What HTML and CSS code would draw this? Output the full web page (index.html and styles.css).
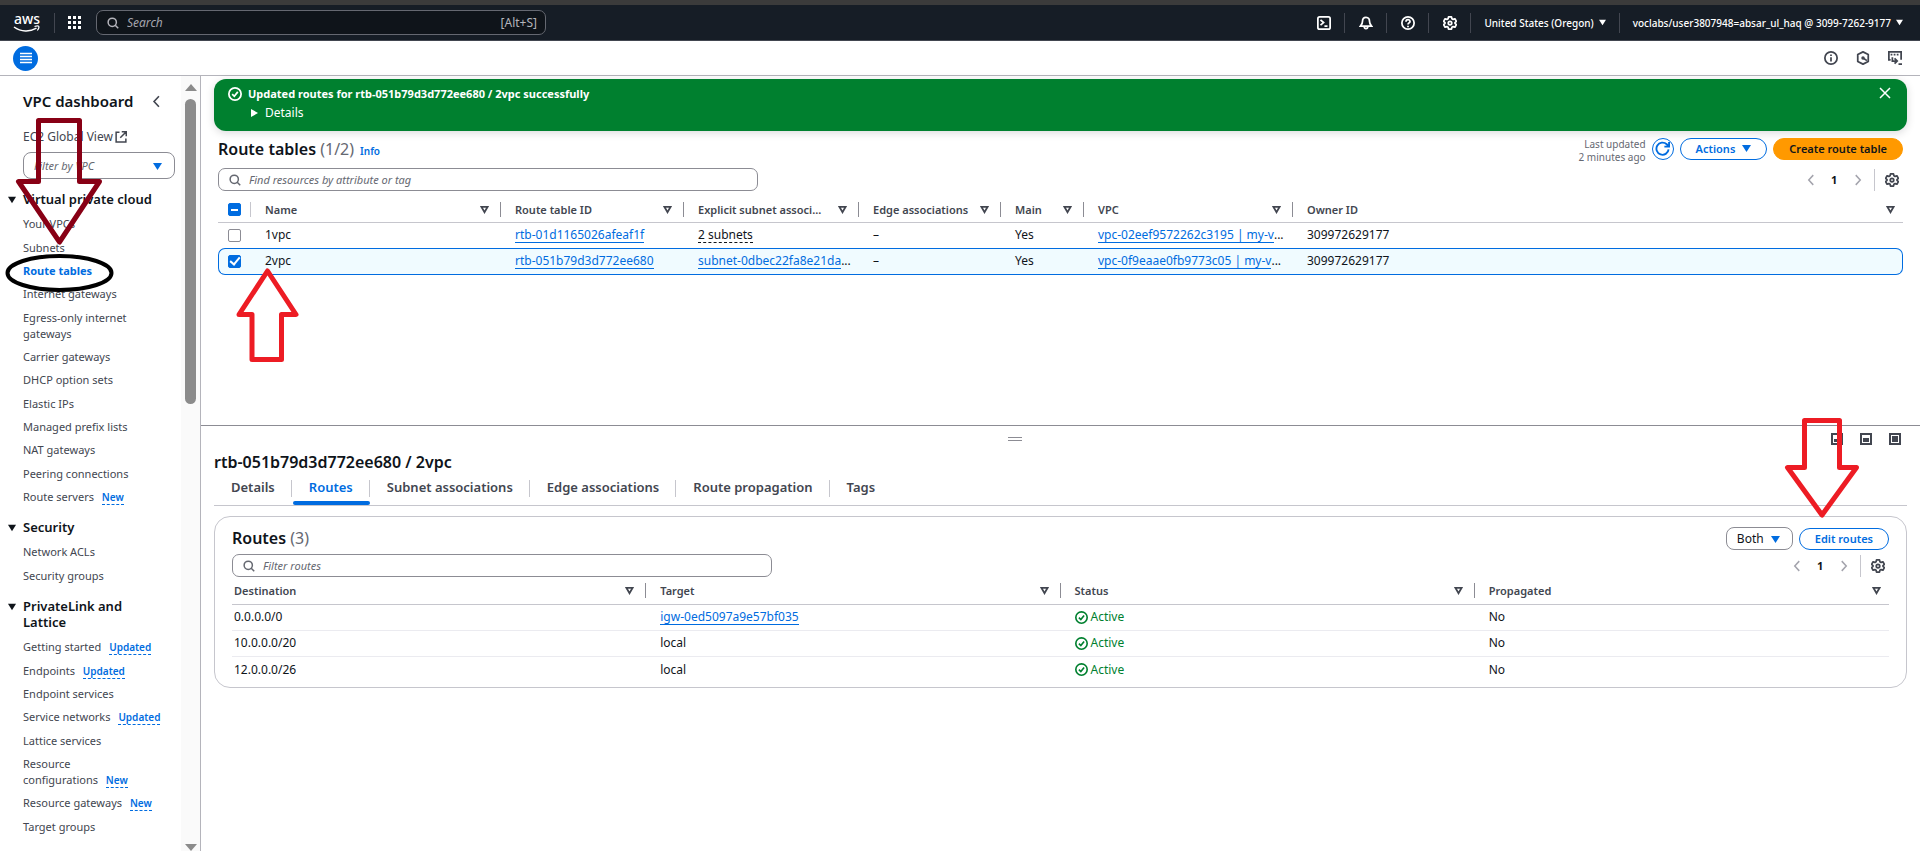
FILE: index.html
```html
<!DOCTYPE html>
<html lang="en">
<head>
  <meta charset="UTF-8" />
  <meta name="viewport" content="width=device-width, initial-scale=1.0">
  <title>Route tables | VPC Console</title>
  <link rel="stylesheet" href="styles.css">
</head>
<body>
  <!-- Shared icons -->
  <svg class="sprite" width="0" height="0">
    <symbol id="i-search" viewBox="0 0 16 16"><g fill="none" stroke="currentColor" stroke-width="2"><circle cx="7" cy="7" r="5.5"/><path d="M11 11l4 4"/></g></symbol>
    <symbol id="i-caret" viewBox="0 0 10 10"><path d="M0 1h10L5 9z" fill="currentColor"/></symbol>
    <symbol id="i-filter" viewBox="0 0 10 10"><path d="M1.500 2h7L5 8z" fill="none" stroke="currentColor" stroke-width="2"/></symbol>
    <symbol id="i-left" viewBox="0 0 16 16"><path d="M11 1.500L5 8l6 6.500" fill="none" stroke="currentColor" stroke-width="2"/></symbol>
    <symbol id="i-right" viewBox="0 0 16 16"><path d="M5 1.500L11 8l-6 6.500" fill="none" stroke="currentColor" stroke-width="2"/></symbol>
    <symbol id="i-check" viewBox="0 0 16 16"><g fill="none" stroke="currentColor" stroke-width="2"><circle cx="8" cy="8" r="7"/><path d="M4.800 8.200l2.400 2.400 4-5"/></g></symbol>
    <symbol id="i-gear" viewBox="0 0 16 16"><g fill="none" stroke="currentColor" stroke-width="2" stroke-linejoin="round"><path d="M6.300 1h3.400l.5 2.100 1.300.8 2.100-.7 1.700 2.900-1.600 1.500v.8l1.600 1.500-1.700 2.900-2.100-.7-1.300.8-.5 2.100H6.300l-.5-2.100-1.300-.8-2.100.7L.7 9.900l1.600-1.500v-.8L.7 6.100l1.700-2.900 2.100.7 1.300-.8z"/><circle cx="8" cy="8" r="2"/></g></symbol>
  </svg>

  <header class="topbar">
    <a class="logo" href="#" aria-label="AWS home">
      <svg width="32" height="30" viewBox="0 0 32 30"><text x="1" y="16" class="logo-text">aws</text><path d="M1 19c7 5 16 5 22.500 1.200" fill="none" stroke="#fff" stroke-width="1.500"/><path d="M21.500 18.500c2-.6 4-.6 4.300 0s-.3 2.500-1.500 4" fill="none" stroke="#fff" stroke-width="1.200"/></svg>
    </a>
    <button class="apps" aria-label="Services">
      <svg width="13" height="13" viewBox="0 0 13 13" fill="#fff"><path d="M0 0h3v3H0zM5 0h3v3H5zM10 0h3v3h-3zM0 5h3v3H0zM5 5h3v3H5zM10 5h3v3h-3zM0 10h3v3H0zM5 10h3v3H5zM10 10h3v3h-3z"/></svg>
    </button>
    <label class="global-search">
      <svg width="12" height="12"><use href="#i-search"/></svg>
      <input type="text" placeholder="Search" aria-label="Search">
      <span>[Alt+S]</span>
    </label>
    <div class="top-actions">
      <button aria-label="CloudShell"><svg width="14" height="14" viewBox="0 0 16 16" fill="none" stroke="currentColor" stroke-width="2"><rect x="1" y="1" width="14" height="14" rx="2"/><path d="M4 4.500l3.500 3L4 10.500M8.500 11.500H12"/></svg></button>
      <button aria-label="Notifications"><svg width="14" height="14" viewBox="0 0 16 16" fill="none" stroke="currentColor" stroke-width="2"><path d="M8 1.500c-3 0-4 2.200-4 4.500 0 3-1 4-2.300 5.500h12.600C13 10 12 9 12 6c0-2.300-1-4.500-4-4.500z"/><path d="M6 12c0 3.200 4 3.200 4 0"/></svg></button>
      <button aria-label="Help"><svg width="14" height="14" viewBox="0 0 16 16" fill="none" stroke="currentColor" stroke-width="2"><circle cx="8" cy="8" r="7"/><path d="M5.700 6.500c0-3 4.600-3 4.600-.3C10.300 8 8 7.800 8 9.800M8 11v1.800"/></svg></button>
      <button aria-label="Settings"><svg width="14" height="14"><use href="#i-gear"/></svg></button>
      <button class="text-btn">United States (Oregon) <svg width="7" height="7"><use href="#i-caret"/></svg></button>
      <button class="text-btn">voclabs/user3807948=absar_ul_haq @ 3099-7262-9177 <svg width="7" height="7"><use href="#i-caret"/></svg></button>
    </div>
  </header>

  <div class="toolbar">
    <button class="menu-btn" aria-label="Menu"><svg width="12" height="12" viewBox="0 0 12 12" stroke="#fff" stroke-width="1.500"><path d="M0 1.500h12M0 4.500h12M0 7.500h12M0 10.500h12"/></svg></button>
    <div class="toolbar-icons">
      <button aria-label="Info"><svg width="14" height="14" viewBox="0 0 16 16" fill="none" stroke="currentColor" stroke-width="2"><circle cx="8" cy="8" r="7"/><path d="M8 7v5M8 4v1.800"/></svg></button>
      <button aria-label="Amazon Q"><svg width="14" height="14" viewBox="0 0 16 16" fill="none" stroke="currentColor" stroke-width="2"><path d="M8 1l6 3v8l-6 3-6-3V4z" stroke-linejoin="round"/><path d="M8 8l4.500 3"/><circle cx="8" cy="8" r="2" fill="currentColor" stroke="none"/></svg></button>
      <button aria-label="Console panel"><svg width="14" height="14" viewBox="0 0 16 16" fill="none" stroke="currentColor" stroke-width="2"><path d="M3 10H1V1h14v9"/><path d="M3 4h10" stroke-dasharray="2 1.500"/><path d="M5 7v4.500h5M7.500 8.500l3 3-3 3M12 15h4"/></svg></button>
    </div>
  </div>

  <div class="layout">
    <nav class="sidebar">
      <div class="side-content">
        <div class="side-title"><h2>VPC dashboard</h2><button aria-label="Close navigation"><svg width="13" height="13"><use href="#i-left"/></svg></button></div>
        <a class="global-view" href="#">EC2 Global View <svg width="12" height="12" viewBox="0 0 16 16" fill="none" stroke="currentColor" stroke-width="2"><path d="M6 1.500H1.500v13h13V10M9 1h6v6M15 1L7 9"/></svg></a>
        <div class="select-wrap vpc-filter">
          <select aria-label="Filter by VPC"><option>Filter by VPC</option></select>
          <svg width="9" height="9"><use href="#i-caret"/></svg>
        </div>

        <section>
          <h3><svg width="8" height="8"><use href="#i-caret"/></svg>Virtual private cloud</h3>
          <ul>
            <li><a href="#">Your VPCs</a></li>
            <li><a href="#">Subnets</a></li>
            <li><a href="#" class="current">Route tables</a></li>
            <li><a href="#">Internet gateways</a></li>
            <li><a href="#">Egress-only internet gateways</a></li>
            <li><a href="#">Carrier gateways</a></li>
            <li><a href="#">DHCP option sets</a></li>
            <li><a href="#">Elastic IPs</a></li>
            <li><a href="#">Managed prefix lists</a></li>
            <li><a href="#">NAT gateways</a></li>
            <li><a href="#">Peering connections</a></li>
            <li><a href="#">Route servers</a> <span class="badge">New</span></li>
          </ul>
        </section>

        <section>
          <h3><svg width="8" height="8"><use href="#i-caret"/></svg>Security</h3>
          <ul>
            <li><a href="#">Network ACLs</a></li>
            <li><a href="#">Security groups</a></li>
          </ul>
        </section>

        <section>
          <h3><svg width="8" height="8"><use href="#i-caret"/></svg>PrivateLink and<br>Lattice</h3>
          <ul>
            <li><a href="#">Getting started</a> <span class="badge">Updated</span></li>
            <li><a href="#">Endpoints</a> <span class="badge">Updated</span></li>
            <li><a href="#">Endpoint services</a></li>
            <li><a href="#">Service networks</a> <span class="badge">Updated</span></li>
            <li><a href="#">Lattice services</a></li>
            <li><a href="#">Resource<br>configurations</a> <span class="badge">New</span></li>
            <li><a href="#">Resource gateways</a> <span class="badge">New</span></li>
            <li><a href="#">Target groups</a></li>
          </ul>
        </section>
      </div>
      <div class="scrollbar">
        <svg width="12" height="7" viewBox="0 0 12 7"><path d="M0 7h12L6 0z" fill="#8b8b8b"/></svg>
        <div class="track"><div class="thumb"></div></div>
        <svg width="12" height="7" viewBox="0 0 12 7"><path d="M0 0h12L6 7z" fill="#8b8b8b"/></svg>
      </div>
    </nav>

    <main>
      <div class="list-pane">
        <div class="flash">
          <svg width="14" height="14"><use href="#i-check"/></svg>
          <div class="flash-text">
            <strong>Updated routes for rtb-051b79d3d772ee680 / 2vpc successfully</strong>
            <button><svg width="7" height="8" viewBox="0 0 7 8"><path d="M0 0l7 4-7 4z" fill="#fff"/></svg>Details</button>
          </div>
          <button aria-label="Dismiss"><svg width="12" height="12" viewBox="0 0 12 12" stroke="#fff" stroke-width="1.500"><path d="M1 1l10 10M11 1L1 11"/></svg></button>
        </div>

        <div class="list">
          <div class="list-head">
            <h1>Route tables <span class="count">(1/2)</span></h1>
            <a class="info" href="#">Info</a>
            <div class="updated">Last updated<br>2 minutes ago</div>
            <button class="btn round" aria-label="Refresh"><svg width="15" height="15" viewBox="0 0 16 16" fill="none" stroke="currentColor" stroke-width="2"><path d="M14.500 9a6.500 6.500 0 1 1-2-5.500L14.500 5.500M15 1v5h-5"/></svg></button>
            <button class="btn actions">Actions <svg width="9" height="9"><use href="#i-caret"/></svg></button>
            <button class="btn primary">Create route table</button>
          </div>
          <div class="filter-row">
            <label class="filter-box"><svg width="12" height="12"><use href="#i-search"/></svg><input type="text" placeholder="Find resources by attribute or tag" aria-label="Find resources"></label>
            <div class="pager">
              <button aria-label="Previous page"><svg width="12" height="12"><use href="#i-left"/></svg></button>
              <b>1</b>
              <button aria-label="Next page"><svg width="12" height="12"><use href="#i-right"/></svg></button>
              <button class="prefs" aria-label="Preferences"><svg width="14" height="14"><use href="#i-gear"/></svg></button>
            </div>
          </div>
          <table class="tables-grid">
            <colgroup><col class="c-check"><col class="c-name"><col class="c-id"><col class="c-subnet"><col class="c-edge"><col class="c-main"><col class="c-vpc"><col></colgroup>
            <thead>
              <tr>
                <th><div><input type="checkbox" class="mixed" aria-label="Select all"></div></th>
                <th><div>Name<svg width="9" height="9"><use href="#i-filter"/></svg></div></th>
                <th><div>Route table ID<svg width="9" height="9"><use href="#i-filter"/></svg></div></th>
                <th><div>Explicit subnet associ...<svg width="9" height="9"><use href="#i-filter"/></svg></div></th>
                <th><div>Edge associations<svg width="9" height="9"><use href="#i-filter"/></svg></div></th>
                <th><div>Main<svg width="9" height="9"><use href="#i-filter"/></svg></div></th>
                <th><div>VPC<svg width="9" height="9"><use href="#i-filter"/></svg></div></th>
                <th><div>Owner ID<svg width="9" height="9"><use href="#i-filter"/></svg></div></th>
              </tr>
            </thead>
            <tbody>
              <tr>
                <td><input type="checkbox" aria-label="Select 1vpc"></td>
                <td>1vpc</td>
                <td><a href="#">rtb-01d1165026afeaf1f</a></td>
                <td><span class="dashed">2 subnets</span></td>
                <td>–</td>
                <td>Yes</td>
                <td><a href="#">vpc-02eef9572262c3195 | my-v</a>...</td>
                <td>309972629177</td>
              </tr>
              <tr class="selected">
                <td><input type="checkbox" aria-label="Select 2vpc" checked></td>
                <td>2vpc</td>
                <td><a href="#">rtb-051b79d3d772ee680</a></td>
                <td><a href="#">subnet-0dbec22fa8e21da</a>...</td>
                <td>–</td>
                <td>Yes</td>
                <td><a href="#">vpc-0f9eaae0fb9773c05 | my-v</a>...</td>
                <td>309972629177</td>
              </tr>
            </tbody>
          </table>
        </div>
      </div>

      <div class="split-panel">
        <div class="panel-bar">
          <div class="handle-area"><div class="handle"></div></div>
          <div class="panel-icons">
            <button aria-label="Small panel"><svg width="12" height="12" viewBox="0 0 12 12"><rect x="1" y="1" width="10" height="10" fill="none" stroke="currentColor" stroke-width="2"/><path d="M3 6h4v3H3z" fill="currentColor"/></svg></button>
            <button aria-label="Half panel"><svg width="12" height="12" viewBox="0 0 12 12"><rect x="1" y="1" width="10" height="10" fill="none" stroke="currentColor" stroke-width="2"/><path d="M3 5h6v4H3z" fill="currentColor"/></svg></button>
            <button aria-label="Full panel"><svg width="12" height="12" viewBox="0 0 12 12"><rect x="1" y="1" width="10" height="10" fill="none" stroke="currentColor" stroke-width="2"/><path d="M3 3h6v6H3z" fill="currentColor"/></svg></button>
          </div>
        </div>
        <h2>rtb-051b79d3d772ee680 / 2vpc</h2>
        <div class="tabs">
          <button>Details</button>
          <button class="active">Routes</button>
          <button>Subnet associations</button>
          <button>Edge associations</button>
          <button>Route propagation</button>
          <button>Tags</button>
        </div>

        <div class="card">
          <div class="card-head">
            <h2>Routes <span class="count">(3)</span></h2>
            <div class="select-wrap both"><select aria-label="Route type"><option>Both</option></select><svg width="9" height="9"><use href="#i-caret"/></svg></div>
            <button class="btn">Edit routes</button>
          </div>
          <div class="filter-row">
            <label class="filter-box"><svg width="12" height="12"><use href="#i-search"/></svg><input type="text" placeholder="Filter routes" aria-label="Filter routes"></label>
            <div class="pager">
              <button aria-label="Previous page"><svg width="12" height="12"><use href="#i-left"/></svg></button>
              <b>1</b>
              <button aria-label="Next page"><svg width="12" height="12"><use href="#i-right"/></svg></button>
              <button class="prefs" aria-label="Preferences"><svg width="14" height="14"><use href="#i-gear"/></svg></button>
            </div>
          </div>
          <table class="routes">
            <thead>
              <tr>
                <th><div>Destination<svg width="9" height="9"><use href="#i-filter"/></svg></div></th>
                <th><div>Target<svg width="9" height="9"><use href="#i-filter"/></svg></div></th>
                <th><div>Status<svg width="9" height="9"><use href="#i-filter"/></svg></div></th>
                <th><div>Propagated<svg width="9" height="9"><use href="#i-filter"/></svg></div></th>
              </tr>
            </thead>
            <tbody>
              <tr><td>0.0.0.0/0</td><td><a href="#">igw-0ed5097a9e57bf035</a></td><td><span class="ok"><svg width="13" height="13"><use href="#i-check"/></svg>Active</span></td><td>No</td></tr>
              <tr><td>10.0.0.0/20</td><td>local</td><td><span class="ok"><svg width="13" height="13"><use href="#i-check"/></svg>Active</span></td><td>No</td></tr>
              <tr><td>12.0.0.0/26</td><td>local</td><td><span class="ok"><svg width="13" height="13"><use href="#i-check"/></svg>Active</span></td><td>No</td></tr>
            </tbody>
          </table>
        </div>
      </div>
    </main>
  </div>

  <!-- Hand-drawn markers over the console -->
  <svg class="marks left" width="310" height="380" viewBox="0 0 310 380" fill="none" stroke-width="5" stroke-linejoin="round">
    <path d="M38.500 120.500h41v61H99.500L59.500 242 18.500 181.500h20z" stroke="#880015"/>
    <path d="M267.500 271L296 314.500h-14.500v45h-29.500v-45h-13z" stroke="#ed1c24"/>
    <ellipse cx="59.500" cy="273" rx="52" ry="17" stroke="#000" stroke-width="4"/>
  </svg>
  <svg class="marks right" width="80" height="110" viewBox="0 0 80 110" fill="none" stroke="#ed1c24" stroke-width="5" stroke-linejoin="round">
    <path d="M24.500 10.500h35v47H76.500L42 105 7.500 57.500h17z"/>
  </svg>
</body>
</html>
```
FILE: styles.css
```css
* {
  box-sizing: border-box;
}

body {
  margin: 0;
  height: 100vh;
  overflow: hidden;
  display: flex;
  flex-direction: column;
  position: relative;
  font-family: "Noto Sans", "Open Sans", sans-serif;
  font-size: 11px;
  line-height: 16px;
  color: #0f141a;
  background: #fff;
}

button {
  font: inherit;
  color: inherit;
  background: none;
  border: none;
  padding: 0;
  display: flex;
  align-items: center;
  justify-content: center;
}

input,
select {
  font: inherit;
  color: inherit;
  background: none;
  border: none;
  outline: none;
  padding: 0;
  margin: 0;
}

h1, h2, h3, ul {
  margin: 0;
  padding: 0;
}

h1, h2 {
  font-size: 16px;
  line-height: 22px;
  font-weight: 600;
}

a {
  color: #006ce0;
  text-decoration: none;
}

svg {
  flex: none;
}

.sprite {
  position: absolute;
}

/* top bar */
.topbar {
  display: flex;
  align-items: center;
  height: 41px;
  flex: none;
  border-top: 5px solid #3b3b3b;
  border-bottom: 1px solid #424650;
  background: #161d26;
  color: #fff;
}

.logo {
  display: flex;
  align-items: center;
  width: 55px;
  height: 20px;
  padding-left: 13px;
  border-right: 1px solid #424650;
}

.logo-text {
  font-size: 14px;
  font-weight: 500;
  fill: #fff;
}

.apps {
  width: 39px;
  margin-right: 2px;
}

.global-search {
  display: flex;
  align-items: center;
  gap: 8px;
  width: 450px;
  height: 25px;
  padding: 0 8px 0 10px;
  border: 1px solid #656871;
  border-radius: 7px;
  background: #0f141a;
  color: #b4b4bb;
  font-size: 12px;
}

.global-search input {
  flex: 1;
}

input::placeholder {
  font-style: italic;
  color: #656871;
  opacity: 1;
}

.global-search input::placeholder {
  color: #a4a4ad;
}

.top-actions {
  display: flex;
  margin-left: auto;
}

.top-actions button {
  width: 42px;
  height: 20px;
  border-right: 1px solid #424650;
}

.top-actions .text-btn {
  width: auto;
  gap: 5px;
  padding: 0 13px;
  font-size: 10px;
  font-weight: 500;
}

.top-actions .text-btn:last-child {
  padding-right: 17px;
  border: none;
}

.toolbar {
  display: flex;
  align-items: center;
  justify-content: space-between;
  height: 35px;
  flex: none;
  padding: 0 18px 0 13px;
  border-bottom: 1px solid #b4b4bb;
  color: #424650;
}

.menu-btn {
  width: 25px;
  height: 25px;
  border-radius: 50%;
  background: #006ce0;
}

.toolbar-icons {
  display: flex;
  gap: 18px;
}

/* sidebar */
.layout {
  display: flex;
  flex: 1;
  min-height: 0;
}

.sidebar {
  display: flex;
  width: 201px;
  flex: none;
  border-right: 1px solid #b4b4bb;
  color: #424650;
}

.side-content {
  flex: 1;
  padding: 14px 6px 0 23px;
  overflow: hidden;
}

.side-title {
  display: flex;
  justify-content: space-between;
  align-items: center;
  padding-right: 12px;
  color: #0f141a;
}

.side-title h2 {
  font-size: 15px;
}

.side-title button {
  color: #424650;
}

.side-content a {
  color: #424650;
}

.side-content .global-view {
  display: flex;
  align-items: center;
  gap: 2px;
  margin: 17px 0 7px;
  font-size: 12px;
}

.select-wrap {
  position: relative;
}

.select-wrap select {
  appearance: none;
  width: 100%;
  height: 100%;
  padding: 0 10px;
  border: 1px solid #8c8c94;
  border-radius: 8px;
}

.select-wrap svg {
  position: absolute;
  right: 13px;
  top: 50%;
  margin-top: -4px;
  color: #006ce0;
  pointer-events: none;
}

.vpc-filter {
  height: 27px;
  font-style: italic;
  color: #656871;
}

h3 {
  display: flex;
  margin: 12px 0 9px -15px;
  gap: 7px;
  font-size: 13px;
  line-height: 16px;
  font-weight: 600;
  color: #0f141a;
}

section + section h3 {
  margin-top: 14px;
}

h3 svg {
  margin-top: 5px;
}

.side-content ul {
  list-style: none;
}

.side-content li {
  margin-bottom: 7px;
}

.side-content li:nth-child(3n+1) {
  margin-bottom: 8px;
}

.side-content .current {
  color: #006ce0;
  font-weight: 700;
}

.badge {
  margin-left: 5px;
  font-size: 10px;
  font-weight: 600;
  color: #006ce0;
  border-bottom: 1px dashed #006ce0;
}

.scrollbar {
  display: flex;
  flex-direction: column;
  align-items: center;
  width: 19px;
  padding-top: 8px;
  background: #fafafa;
}

.track {
  flex: 1;
  width: 11px;
  padding-top: 8px;
}

.thumb {
  height: 41%;
  border-radius: 6px;
  background: #8b8b8b;
}

/* main */
main {
  flex: 1;
  min-width: 0;
  display: flex;
  flex-direction: column;
}

.list-pane {
  height: 349px;
  flex: none;
  padding: 3px 13px 0;
}

.flash {
  display: flex;
  align-items: flex-start;
  height: 52px;
  padding: 8px 16px 0 14px;
  border-radius: 12px;
  background: #00802f;
  color: #fff;
  box-shadow: 0 2px 8px rgba(0, 7, 22, 0.15);
}

.flash-text {
  flex: 1;
  margin: -2px 0 0 6px;
}

.flash-text strong {
  display: block;
  line-height: 18px;
  font-weight: 700;
}

.flash-text button {
  gap: 7px;
  padding-left: 3px;
  line-height: 20px;
  font-size: 12px;
}

.list {
  padding: 0 4px;
}

.list-head {
  display: flex;
  align-items: center;
  gap: 6px;
  height: 35px;
  margin-bottom: 2px;
}

.card-head h2 {
  padding-bottom: 2px;
}

.count {
  font-weight: 400;
  color: #656871;
}

.info {
  font-size: 10px;
  font-weight: 600;
  padding-top: 4px;
}

.updated {
  margin-left: auto;
  font-size: 10px;
  line-height: 13px;
  text-align: right;
  padding-top: 4px;
  color: #656871;
}

.btn {
  height: 22px;
  padding: 0 15px;
  border: 1px solid #006ce0;
  border-radius: 11px;
  color: #006ce0;
  font-weight: 600;
}

.round {
  width: 22px;
  padding: 0;
}

.actions {
  gap: 7px;
}

.primary {
  border-color: #ff9900;
  background: #ff9900;
  color: #0f141a;
}

.filter-row {
  display: flex;
  align-items: center;
  justify-content: space-between;
}

.filter-box {
  display: flex;
  align-items: center;
  gap: 8px;
  width: 540px;
  height: 23px;
  padding: 0 10px;
  border: 1px solid #8c8c94;
  border-radius: 7px;
  color: #656871;
}

.filter-box input {
  flex: 1;
}

.pager {
  display: flex;
  align-items: center;
  gap: 14px;
  color: #424650;
}

.pager button {
  color: #a4a4ad;
}

.pager b {
  width: 7px;
  color: #0f141a;
}

.pager .prefs {
  height: 22px;
  margin-left: -4px;
  padding: 0 4px 0 10px;
  border-left: 1px solid #c6c6cd;
  color: #424650;
}

table {
  width: 100%;
  table-layout: fixed;
  border-collapse: separate;
  border-spacing: 0;
}

th, td {
  height: 26px;
  padding: 0 0 0 14px;
  text-align: left;
  white-space: nowrap;
}

td {
  padding-bottom: 1px;
  border-bottom: 1px solid #ebebf0;
  font-size: 12px;
}

th {
  font-weight: 600;
  color: #424650;
  border-bottom: 1px solid #c6c6cd;
}

th div {
  display: flex;
  align-items: center;
  justify-content: space-between;
  height: 15px;
  padding-right: 11px;
  border-right: 1px solid #8c8c94;
}

th:last-child div {
  border: none;
  padding-right: 8px;
}

td a {
  display: inline-block;
  line-height: 14px;
  border-bottom: 1px solid #006ce0;
}

.tables-grid th {
  height: 32px;
  padding-top: 6px;
}

.tables-grid td {
  height: 25px;
  border: none;
}

.tables-grid th:first-child,
.tables-grid td:first-child {
  padding-left: 10px;
}

.tables-grid th:first-child div {
  border-color: #c6c6cd;
  padding-right: 9px;
}

.c-check { width: 33px; }
.c-name { width: 250px; }
.c-id { width: 183px; }
.c-subnet { width: 175px; }
.c-edge { width: 142px; }
.c-main { width: 83px; }
.c-vpc { width: 209px; }

.tables-grid .selected td {
  height: 27px;
  background: #f0fbff;
  border-top: 1px solid #006ce0;
  border-bottom: 1px solid #006ce0;
}

.tables-grid .selected td:first-child {
  padding-left: 9px;
  border-left: 1px solid #006ce0;
  border-radius: 7px 0 0 7px;
}

.tables-grid .selected td:last-child {
  border-right: 1px solid #006ce0;
  border-radius: 0 7px 7px 0;
}

.dashed {
  display: inline-block;
  line-height: 14px;
  border-bottom: 1px dashed #0f141a;
}

input[type="checkbox"] {
  appearance: none;
  display: grid;
  place-items: center;
  width: 13px;
  height: 13px;
  border: 1px solid #8c8c94;
  border-radius: 2px;
}

input[type="checkbox"]:checked,
input.mixed {
  background: #006ce0;
  border-color: #006ce0;
}

input.mixed::after {
  content: "";
  width: 7px;
  height: 2px;
  background: #fff;
}

input[type="checkbox"]:checked::after {
  content: "";
  width: 4px;
  height: 8px;
  margin-top: -2px;
  border: solid #fff;
  border-width: 0 2px 2px 0;
  transform: rotate(40deg);
}

/* split panel */
.split-panel {
  flex: 1;
  padding: 0 13px;
  border-top: 1px solid #8c8c94;
}

.panel-bar {
  display: flex;
  align-items: center;
  height: 25px;
  margin-right: 6px;
}

.handle-area {
  flex: 1;
  display: flex;
  justify-content: center;
}

.handle {
  width: 14px;
  height: 4px;
  border: solid #8c8c94;
  border-width: 1px 0;
}

.panel-icons {
  display: flex;
  gap: 17px;
  padding-left: 16px;
  color: #424650;
}

.tabs {
  display: flex;
  height: 33px;
  border-bottom: 1px solid #c6c6cd;
  color: #424650;
}

.tabs button {
  position: relative;
  height: 17px;
  margin-top: 7px;
  padding: 0 16px 2px 17px;
  border-right: 1px solid #c6c6cd;
  font-size: 13px;
  line-height: 15px;
  font-weight: 600;
}

.tabs button:last-child {
  border: none;
}

.tabs .active {
  color: #006ce0;
}

.tabs .active::after {
  content: "";
  position: absolute;
  left: 1px;
  right: -1px;
  bottom: -8px;
  height: 4px;
  border-radius: 2px;
  background: #006ce0;
}

.card {
  margin-top: 10px;
  padding: 10px 17px 4px;
  border: 1px solid #c6c6cd;
  border-radius: 16px;
}

.card-head {
  display: flex;
  align-items: center;
  gap: 6px;
  height: 23px;
  margin-bottom: 4px;
}

.card-head h2 {
  margin-right: auto;
}

.both {
  width: 67px;
  height: 23px;
  font-size: 12px;
}

.routes th {
  height: 28px;
}

.routes th:first-child,
.routes td:first-child {
  padding-left: 2px;
}

.routes tr:last-child td {
  border: none;
}

.ok {
  display: flex;
  align-items: center;
  gap: 3px;
  color: #00802f;
}

/* markers */
.marks {
  position: absolute;
  pointer-events: none;
}

.marks.left {
  left: 0;
  top: 0;
}

.marks.right {
  right: 60px;
  top: 410px;
}
```
